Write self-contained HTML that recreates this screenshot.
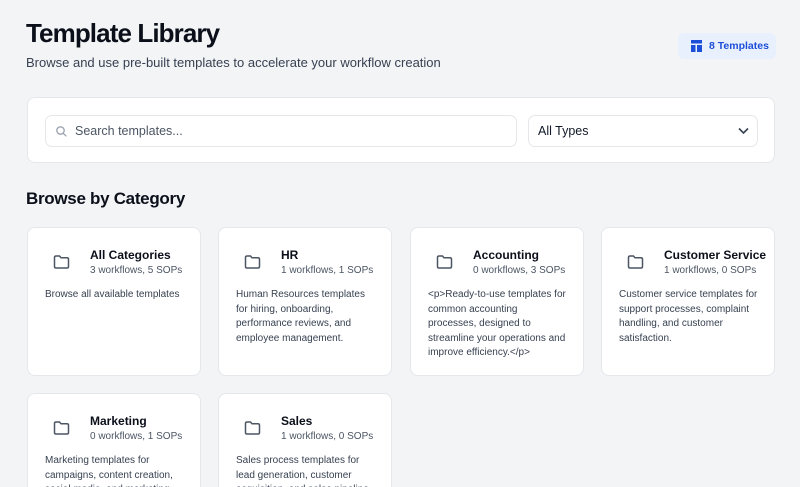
<!DOCTYPE html>
<html><head><meta charset="utf-8"><style>
*{box-sizing:border-box;margin:0;padding:0}
html,body{width:800px;height:487px;overflow:hidden}
body{background:#f3f4f6;font-family:"Liberation Sans",sans-serif;color:#111827;position:relative}
h1{position:absolute;left:26px;top:18px;font-size:26px;font-weight:900;letter-spacing:-0.9px;color:#0b0f1a}
.sub{position:absolute;left:26px;top:55px;font-size:13px;color:#374151}
.badge{position:absolute;left:678px;top:33px;width:98px;height:26px;background:#e8f0fd;border-radius:6px;color:#1d4ed8;font-size:10.5px;font-weight:bold;padding:7px 0 0 31px}
.badge svg{position:absolute;left:13px;top:7px}
.panel{position:absolute;left:27px;top:97px;width:748px;height:66px;background:#fff;border:1px solid #e5e7eb;border-radius:8px}
.search{position:absolute;left:17px;top:17px;width:472px;height:32px;border:1px solid #e5e7eb;border-radius:7px;font-size:12.5px;color:#4b5563;padding:8px 0 0 29px}
.search svg{position:absolute;left:10px;top:10px}
.sel{position:absolute;left:500px;top:17px;width:230px;height:32px;border:1px solid #e5e7eb;border-radius:7px;font-size:12.5px;color:#111827;padding:8px 0 0 9px}
.sel svg{position:absolute;right:8px;top:11px}
h2{position:absolute;left:26px;top:189px;font-size:17px;font-weight:900;letter-spacing:-0.3px;color:#0b0f1a}
.card{position:absolute;width:174px;height:149px;background:#fff;border:1px solid #e5e7eb;border-radius:8px}
.card svg{position:absolute;left:25px;top:27px}
.card .t{position:absolute;left:62px;top:20px;font-size:12px;font-weight:bold;color:#0b0f1a;white-space:nowrap}
.card .m{position:absolute;left:62px;top:37px;font-size:10px;color:#4b5563}
.card .d{position:absolute;left:17px;top:60px;width:140px;font-size:10px;line-height:14.5px;color:#374151}
</style></head><body>
<h1>Template Library</h1>
<div class="sub">Browse and use pre-built templates to accelerate your workflow creation</div>
<div class="badge"><svg width="11" height="12" viewBox="0 0 11 12"><rect x="0" y="0" width="11" height="3.5" fill="#1d4ed8"/><rect x="0" y="5" width="4.5" height="7" fill="#1d4ed8"/><rect x="6" y="5" width="5" height="7" fill="#1d4ed8"/></svg>8 Templates</div>
<div class="panel">
<div class="search"><svg width="11" height="11" viewBox="0 0 11 11" fill="none" stroke="#9ca3af" stroke-width="1.3"><circle cx="4.5" cy="4.5" r="3.7"/><path d="M7.3 7.3L10.3 10.3"/></svg>Search templates...</div>
<div class="sel">All Types<svg width="11" height="8" viewBox="0 0 11 8" fill="none" stroke="#374151" stroke-width="1.6"><path d="M1 1.5L5.5 6L10 1.5"/></svg></div>
</div>
<h2>Browse by Category</h2>
<div class="card" style="left:27px;top:227px"><svg width="17" height="14" viewBox="0 0 17 14" fill="none" stroke="#4b5563" stroke-width="1.5"><path d="M1.5 2.5Q1.5 1 3 1H6.5L8 2.7H14Q15.5 2.7 15.5 4.2V11.5Q15.5 13 14 13H3Q1.5 13 1.5 11.5Z"/></svg><div class="t">All Categories</div><div class="m">3 workflows, 5 SOPs</div><div class="d">Browse all available templates</div></div>
<div class="card" style="left:218px;top:227px"><svg width="17" height="14" viewBox="0 0 17 14" fill="none" stroke="#4b5563" stroke-width="1.5"><path d="M1.5 2.5Q1.5 1 3 1H6.5L8 2.7H14Q15.5 2.7 15.5 4.2V11.5Q15.5 13 14 13H3Q1.5 13 1.5 11.5Z"/></svg><div class="t">HR</div><div class="m">1 workflows, 1 SOPs</div><div class="d">Human Resources templates for hiring, onboarding, performance reviews, and employee management.</div></div>
<div class="card" style="left:410px;top:227px"><svg width="17" height="14" viewBox="0 0 17 14" fill="none" stroke="#4b5563" stroke-width="1.5"><path d="M1.5 2.5Q1.5 1 3 1H6.5L8 2.7H14Q15.5 2.7 15.5 4.2V11.5Q15.5 13 14 13H3Q1.5 13 1.5 11.5Z"/></svg><div class="t">Accounting</div><div class="m">0 workflows, 3 SOPs</div><div class="d">&lt;p&gt;Ready-to-use templates for common accounting processes, designed to streamline your operations and improve efficiency.&lt;/p&gt;</div></div>
<div class="card" style="left:601px;top:227px"><svg width="17" height="14" viewBox="0 0 17 14" fill="none" stroke="#4b5563" stroke-width="1.5"><path d="M1.5 2.5Q1.5 1 3 1H6.5L8 2.7H14Q15.5 2.7 15.5 4.2V11.5Q15.5 13 14 13H3Q1.5 13 1.5 11.5Z"/></svg><div class="t">Customer Service</div><div class="m">1 workflows, 0 SOPs</div><div class="d">Customer service templates for support processes, complaint handling, and customer satisfaction.</div></div>
<div class="card" style="left:27px;top:393px"><svg width="17" height="14" viewBox="0 0 17 14" fill="none" stroke="#4b5563" stroke-width="1.5"><path d="M1.5 2.5Q1.5 1 3 1H6.5L8 2.7H14Q15.5 2.7 15.5 4.2V11.5Q15.5 13 14 13H3Q1.5 13 1.5 11.5Z"/></svg><div class="t">Marketing</div><div class="m">0 workflows, 1 SOPs</div><div class="d">Marketing templates for campaigns, content creation, social media, and marketing analytics.</div></div>
<div class="card" style="left:218px;top:393px"><svg width="17" height="14" viewBox="0 0 17 14" fill="none" stroke="#4b5563" stroke-width="1.5"><path d="M1.5 2.5Q1.5 1 3 1H6.5L8 2.7H14Q15.5 2.7 15.5 4.2V11.5Q15.5 13 14 13H3Q1.5 13 1.5 11.5Z"/></svg><div class="t">Sales</div><div class="m">1 workflows, 0 SOPs</div><div class="d">Sales process templates for lead generation, customer acquisition, and sales pipeline.</div></div>
</body></html>
